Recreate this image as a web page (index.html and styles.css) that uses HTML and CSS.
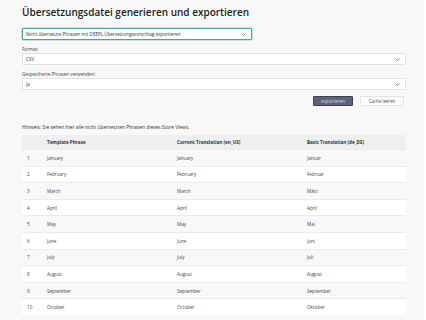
FILE: index.html
```html
<!DOCTYPE html>
<html lang="de">
<head>
<meta charset="utf-8">
<link rel="stylesheet" href="styles.css">
</head>
<body>
<div class="page">
  <h1 class="title">Übersetzungsdatei generieren und exportieren</h1>
  <div class="select select-main">
    <span>Nicht übersetzte Phrasen mit DEEPL Übersetzungsvorschlag exportieren</span>
    <svg class="chev" width="5" height="3" viewBox="0 0 5 3"><path d="M0.5 0.5 L2.5 2.5 L4.5 0.5" fill="none" stroke="#666" stroke-width="0.8"/></svg>
  </div>
  <div class="label">Format:</div>
  <div class="select">
    <span>CSV</span>
    <svg class="chev" width="5" height="3" viewBox="0 0 5 3"><path d="M0.5 0.5 L2.5 2.5 L4.5 0.5" fill="none" stroke="#666" stroke-width="0.8"/></svg>
  </div>
  <div class="label">Gespeicherte Phrasen verwenden:</div>
  <div class="select">
    <span>Ja</span>
    <svg class="chev" width="5" height="3" viewBox="0 0 5 3"><path d="M0.5 0.5 L2.5 2.5 L4.5 0.5" fill="none" stroke="#666" stroke-width="0.8"/></svg>
  </div>
  <div class="actions">
    <button class="btn btn-primary">exportieren</button>
    <button class="btn btn-light">Cache leeren</button>
  </div>
  <p class="hint">Hinweis: Sie sehen hier alle nicht übersetzten Phrasen dieses Store Views.</p>
  <table class="grid">
    <thead>
      <tr><th class="c-num"></th><th class="c-a">Template Phrase</th><th class="c-b">Current Translation (en_US)</th><th>Basic Translation (de_DE)</th></tr>
    </thead>
    <tbody>
      <tr><td class="c-num">1</td><td>January</td><td>January</td><td>Januar</td></tr>
      <tr><td class="c-num">2</td><td>February</td><td>February</td><td>Februar</td></tr>
      <tr><td class="c-num">3</td><td>March</td><td>March</td><td>März</td></tr>
      <tr><td class="c-num">4</td><td>April</td><td>April</td><td>April</td></tr>
      <tr><td class="c-num">5</td><td>May</td><td>May</td><td>Mai</td></tr>
      <tr><td class="c-num">6</td><td>June</td><td>June</td><td>Juni</td></tr>
      <tr><td class="c-num">7</td><td>July</td><td>July</td><td>Juli</td></tr>
      <tr><td class="c-num">8</td><td>August</td><td>August</td><td>August</td></tr>
      <tr><td class="c-num">9</td><td>September</td><td>September</td><td>September</td></tr>
      <tr><td class="c-num">10</td><td>October</td><td>October</td><td>Oktober</td></tr>
    </tbody>
  </table>
</div>
</body>
</html>
```
FILE: styles.css
```css
html, body {
  margin: 0;
  padding: 0;
  background: #ffffff;
}
body {
  font-family: "Open Sans", "Liberation Sans", sans-serif;
  color: #333;
}
.page {
  width: 424px;
  height: 320px;
  background: #f8f8f8;
  padding: 5px 20px 0 22px;
  box-sizing: border-box;
  overflow: hidden;
}
.title {
  margin: 0;
  font-size: 10px;
  font-weight: 600;
  line-height: 14px;
  color: #222;
}
.select {
  box-sizing: border-box;
  height: 12px;
  width: 384px;
  background: #fff;
  border: 1px solid #e2e2e2;
  border-radius: 1px;
  display: flex;
  align-items: center;
  justify-content: space-between;
  padding: 0 5px 0 3px;
  font-size: 4.6px;
  color: #333;
}
.select-main {
  margin-top: 9px;
  width: 230px;
  border: 1px solid #4aa59b;
  box-shadow: 0 0 0 0.6px #9fd0ca;
  padding-left: 3px;
}
.chev {
  flex: none;
}
.label {
  font-size: 4.6px;
  line-height: 6px;
  color: #444;
  margin: 6px 0 1px 0;
}
.actions {
  display: flex;
  justify-content: flex-end;
  gap: 7px;
  margin-top: 6px;
}
.btn {
  height: 10px;
  box-sizing: border-box;
  font-family: inherit;
  font-size: 4.4px;
  padding: 0;
  border-radius: 1px;
}
.btn-primary {
  width: 40px;
  background: #5d6274;
  color: #d8dae0;
  border: 1px solid #3e4250;
}
.btn-light {
  width: 44px;
  background: #fff;
  color: #444;
  border: 1px solid #e2e2e2;
}
.hint {
  margin: 18px 0 0 0;
  font-size: 4.9px;
  line-height: 7px;
  color: #333;
}
.grid {
  margin-top: 4px;
  width: 384px;
  border-collapse: collapse;
  font-size: 4.6px;
  color: #444;
}
.grid th {
  background: #efefef;
  height: 14px;
  text-align: left;
  font-weight: 700;
  color: #333;
  padding: 0;
}
.grid td {
  height: 16.6px;
  padding: 0;
  border-top: 1px solid #ebebeb;
  box-sizing: border-box;
}
.grid tbody tr:nth-child(even) td {
  background: #fff;
}
.grid th.c-num, .grid td.c-num {
  width: 20px;
  padding-left: 5px;
}
.c-a {
  width: 130px;
}
.c-b {
  width: 130px;
}
```
